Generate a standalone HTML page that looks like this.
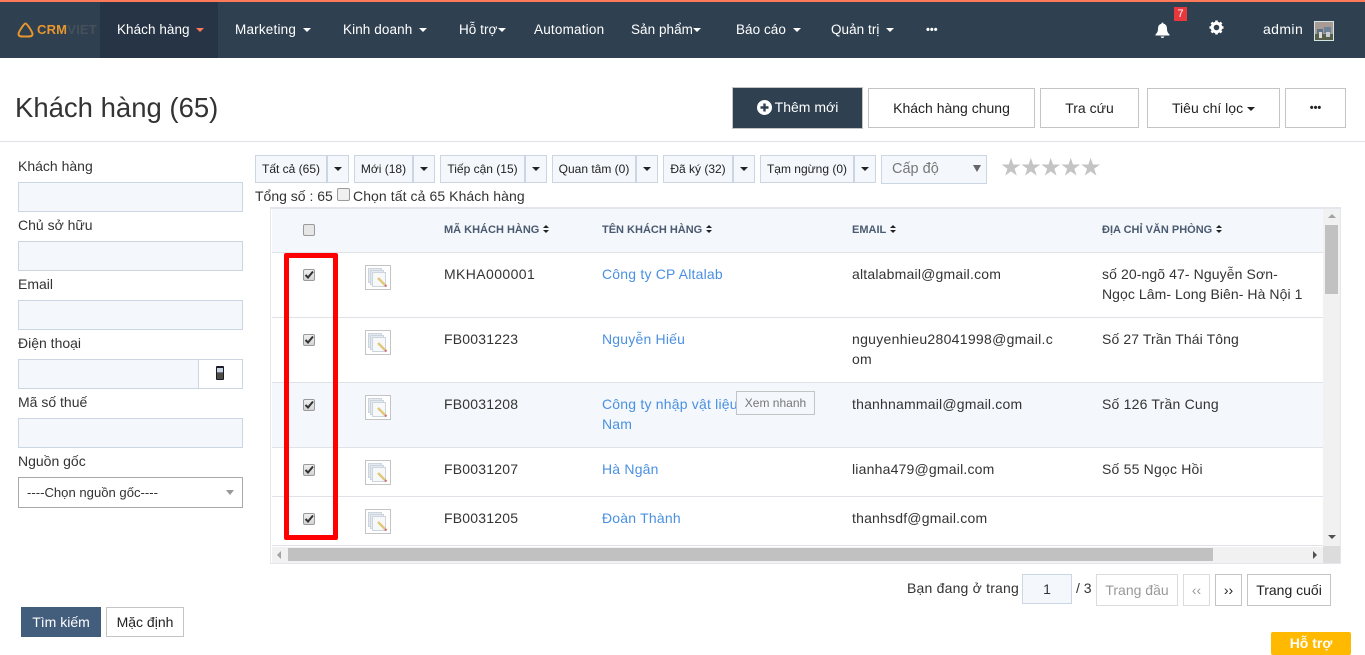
<!DOCTYPE html>
<html><head><meta charset="utf-8">
<style>
html,body{margin:0;padding:0;background:#fff}
body{width:1365px;height:655px;position:relative;overflow:hidden;font-family:"Liberation Sans","Noto Sans CJK SC",sans-serif;font-size:14px;color:#333}
.a,.t,.b,.i{position:absolute;box-sizing:border-box}
.t{white-space:nowrap;line-height:20px}
.w{letter-spacing:.2px}
.n{color:#fff;font-size:13.5px;top:20px;white-space:nowrap;line-height:20px;position:absolute;letter-spacing:.05px}
.car{display:inline-block;width:0;height:0;border-left:4px solid transparent;border-right:4px solid transparent;border-top:4px solid #fff;vertical-align:2px;margin-left:3px}
.b{border:1px solid #c4c4c4;background:#fff;color:#222;text-align:center;white-space:nowrap}
.i{background:#f4f7fb;border:1px solid #cbd6e2}
.f{background:#f4f7fb;border:1px solid #cbd6e2;color:#222;font-size:12px;text-align:center;height:28px;line-height:26px;top:155px;white-space:nowrap;position:absolute;box-sizing:border-box}
.f .car,.d .car{border-top-color:#222;margin:0}
.th{position:absolute;top:221px;font-size:11px;font-weight:bold;color:#4a5a70;line-height:18px;white-space:nowrap}
.so{display:inline-block;width:7px;height:9px;margin-left:4px;vertical-align:-1px;position:relative}
.so:before{content:"";position:absolute;left:0;top:0;border-left:3px solid transparent;border-right:3px solid transparent;border-bottom:3.5px solid #222}
.so:after{content:"";position:absolute;left:0;top:5px;border-left:3px solid transparent;border-right:3px solid transparent;border-top:3.5px solid #222}
.c{position:absolute;width:12px;height:12px;border:1px solid #9a9a9a;border-radius:2px;background:linear-gradient(#efefef,#d4d4d4);box-sizing:border-box}
.c svg{position:absolute;left:0;top:0}
.lk{color:#4a90e2}
.r{position:absolute;left:272px;width:1051px;border-bottom:1px solid #dfe2e6;box-sizing:border-box}
.ic{position:absolute;left:365px;width:26px;height:25px}
</style></head><body>

<!-- top bar -->
<div class="a" style="left:0;top:0;width:1365px;height:58px;background:#2f4050"></div>
<div class="a" style="left:0;top:0;width:1365px;height:2px;background:#ff7a59"></div>
<div class="a" style="left:100px;top:2px;width:118px;height:56px;background:#263445"></div>
<svg class="a" style="left:17px;top:22px" width="17" height="16" viewBox="0 0 17 16"><path d="M8.5 1.5 C10 1.5 15.5 10 15.500 12 C15.500 15 12 14.500 8.500 14.500 C5 14.500 1.500 15 1.500 12 C1.500 10 7 1.500 8.500 1.500Z" fill="none" stroke="#e8962e" stroke-width="2"/></svg>
<div class="t" style="left:37px;top:20px;font-size:13px;font-weight:bold;color:#e8962e;letter-spacing:.2px">CRM<span style="color:#46505a">VIET</span></div>
<div class="n" style="left:117px">Khách hàng <i class="car" style="border-top-color:#ff7a59"></i></div>
<div class="n" style="left:235px;letter-spacing:.2px">Marketing <i class="car"></i></div>
<div class="n" style="left:343px;letter-spacing:.1px">Kinh doanh <i class="car"></i></div>
<div class="n" style="left:459px">Hỗ trợ<i class="car" style="margin-left:1px"></i></div>
<div class="n" style="left:534px;letter-spacing:.2px">Automation</div>
<div class="n" style="left:631px">Sản phẩm<i class="car" style="margin-left:0"></i></div>
<div class="n" style="left:736px">Báo cáo <i class="car"></i></div>
<div class="n" style="left:831px">Quản trị <i class="car"></i></div>
<div class="n" style="left:926px;font-weight:bold;font-size:11px">•••</div>
<svg class="a" style="left:1154px;top:21px" width="17" height="18" viewBox="0 0 17 18"><path d="M8.500 1.500C9.200 1.500 9.500 2 9.500 2.700C12 3.200 13 5 13 8C13 11 14.500 12.500 15.500 13.500L15.500 14.500L1.500 14.500L1.500 13.500C2.500 12.500 4 11 4 8C4 5 5 3.200 7.500 2.700C7.500 2 7.800 1.500 8.500 1.500Z M6.700 15.500L10.300 15.500C10 16.700 9.300 17 8.500 17C7.700 17 7 16.700 6.700 15.500Z" fill="#fff"/></svg>
<div class="a" style="left:1174px;top:7px;width:13px;height:14px;background:#e8383d;color:#fff;font-size:11px;line-height:14px;text-align:center">7</div>
<svg class="a" style="left:1209px;top:20px" width="15" height="15" viewBox="0 0 15 15"><circle cx="7.500" cy="7.500" r="4.300" fill="none" stroke="#fff" stroke-width="3"/><g stroke="#fff" stroke-width="2.600"><path d="M7.500 0.500V3M7.500 12V14.500M.5 7.500H3M12 7.500H14.500M2.500 2.500L4.300 4.300M10.700 10.700L12.500 12.500M2.500 12.500L4.300 10.700M10.700 4.300L12.500 2.500"/></g></svg>
<div class="n" style="left:1263px;top:19px;font-size:14px;letter-spacing:.4px">admin</div>
<svg class="a" style="left:1314px;top:21px" width="20" height="20" viewBox="0 0 20 20"><rect width="20" height="20" fill="#d5e5e5"/><rect x="1" y="1" width="18" height="18" fill="#a89a94"/><rect x="3" y="8" width="6" height="5" fill="#5d7186"/><rect x="10" y="6" width="7" height="6" fill="#6d8296"/><rect x="1" y="13" width="18" height="6" fill="#555f4c"/><rect x="5" y="11" width="3" height="6" fill="#d8dcd4"/><rect x="12" y="11" width="4" height="5" fill="#c4ccd4"/></svg>

<!-- heading -->
<div class="t" style="left:15px;top:91px;font-size:27.5px;line-height:34px;color:#333">Khách hàng (65)</div>
<div class="a" style="left:0;top:141px;width:1365px;height:1px;background:#dfe3e8"></div>
<div class="b" style="left:732px;top:87px;width:131px;height:42px;background:#2f4050;color:#fff;line-height:38px"><svg style="vertical-align:-3px;margin-right:3px" width="15" height="15" viewBox="0 0 15 15"><circle cx="7.500" cy="7.500" r="7.500" fill="#fff"/><path d="M7.500 3.500V11.500M3.500 7.500H11.500" stroke="#2f4050" stroke-width="2.400"/></svg>Thêm mới</div>
<div class="b" style="left:868px;top:88px;width:167px;height:40px;line-height:38px">Khách hàng chung</div>
<div class="b" style="left:1040px;top:88px;width:99px;height:40px;line-height:38px">Tra cứu</div>
<div class="b" style="left:1147px;top:88px;width:133px;height:40px;line-height:38px">Tiêu chí lọc <i class="car" style="border-top-color:#222;margin-left:0"></i></div>
<div class="b" style="left:1285px;top:88px;width:61px;height:40px;line-height:38px;font-size:11px;font-weight:bold">•••</div>

<!-- left form -->
<div class="t" style="left:18px;top:156px">Khách hàng</div>
<div class="i" style="left:18px;top:182px;width:225px;height:30px"></div>
<div class="t" style="left:18px;top:215px">Chủ sở hữu</div>
<div class="i" style="left:18px;top:241px;width:225px;height:30px"></div>
<div class="t" style="left:18px;top:274px">Email</div>
<div class="i" style="left:18px;top:300px;width:225px;height:30px"></div>
<div class="t" style="left:18px;top:333px">Điện thoại</div>
<div class="i" style="left:18px;top:359px;width:181px;height:30px"></div>
<div class="b" style="left:198px;top:359px;width:45px;height:30px;border-color:#cbd6e2"></div>
<svg class="a" style="left:215px;top:365px" width="10" height="16" viewBox="0 0 10 16"><rect x="1" y="1" width="8" height="14" rx="1" fill="#1a1a2a"/><rect x="2" y="3" width="6" height="4.500" fill="#c8d4e0"/><path d="M2 9H8M2 11H8M2 13H8" stroke="#a8a070" stroke-width=".8"/></svg>
<div class="t" style="left:18px;top:392px">Mã số thuế</div>
<div class="i" style="left:18px;top:418px;width:225px;height:30px"></div>
<div class="t" style="left:18px;top:451px">Nguồn gốc</div>
<div class="a" style="left:18px;top:477px;width:225px;height:31px;border:1px solid #a9a9a9;background:#fff;font-size:13.100px;line-height:30px;padding-left:8px">----Chọn nguồn gốc----</div>
<div class="a" style="left:226px;top:490px;border-left:4px solid transparent;border-right:4px solid transparent;border-top:5px solid #999"></div>

<div class="a" style="left:21px;top:607px;width:80px;height:30px;background:#435d7d;color:#fff;text-align:center;line-height:30px">Tìm kiếm</div>
<div class="b" style="left:106px;top:607px;width:78px;height:30px;line-height:28px">Mặc định</div>

<!-- filter row -->
<div class="f" style="left:255px;width:72px">Tất cả (65)</div><div class="f d" style="left:327px;width:22px"><i class="car"></i></div>
<div class="f" style="left:354px;width:59px">Mới (18)</div><div class="f d" style="left:413px;width:22px"><i class="car"></i></div>
<div class="f" style="left:440px;width:85px">Tiếp cận (15)</div><div class="f d" style="left:525px;width:22px"><i class="car"></i></div>
<div class="f" style="left:552px;width:84px">Quan tâm (0)</div><div class="f d" style="left:636px;width:22px"><i class="car"></i></div>
<div class="f" style="left:663px;width:70px">Đã ký (32)</div><div class="f d" style="left:733px;width:22px"><i class="car"></i></div>
<div class="f" style="left:760px;width:94px">Tạm ngừng (0)</div><div class="f d" style="left:854px;width:22px"><i class="car"></i></div>
<div class="f" style="left:881px;width:106px;height:29px;font-size:14.500px;text-align:left;padding-left:10px;color:#777;line-height:27px">Cấp độ</div>
<div class="a" style="left:973px;top:165px;border-left:4px solid transparent;border-right:4px solid transparent;border-top:7px solid #666"></div>
<div class="t" style="left:1001px;top:156px;font-size:20px;line-height:24px;letter-spacing:-.1px;color:#c4c4c4">★★★★★</div>
<div class="t" style="left:255px;top:186px">Tổng số : 65</div>
<div class="c" style="left:337px;top:188px;width:13px;height:13px;background:#f0f0f0"></div>
<div class="t" style="left:353px;top:186px;letter-spacing:.08px">Chọn tất cả 65 Khách hàng</div>

<!-- table -->
<div class="a" style="left:270px;top:207px;width:1071px;height:357px;border:1px solid #e3e6ea;border-top:2px solid #e3e6ea;background:#fff"></div>
<div class="r" style="top:209px;height:44px;background:#f4f7fb"></div>
<div class="r" style="top:253px;height:65px"></div>
<div class="r" style="top:318px;height:65px"></div>
<div class="r" style="top:383px;height:65px;background:#f4f7fb"></div>
<div class="r" style="top:448px;height:49px"></div>
<div class="r" style="top:497px;height:49px"></div>

<div class="c" style="left:303px;top:224px;background:#e6e6e6"></div>
<div class="th" style="left:444px">MÃ KHÁCH HÀNG<i class="so"></i></div>
<div class="th" style="left:602px">TÊN KHÁCH HÀNG<i class="so"></i></div>
<div class="th" style="left:852px">EMAIL<i class="so"></i></div>
<div class="th" style="left:1102px">ĐỊA CHỈ VĂN PHÒNG<i class="so"></i></div>

<!-- checks -->
<div class="c" style="left:303px;top:269px"><svg width="10" height="10" viewBox="0 0 10 10"><path d="M1.500 5L4 7.500L9 1.500" fill="none" stroke="#333" stroke-width="2"/></svg></div>
<div class="c" style="left:303px;top:334px"><svg width="10" height="10" viewBox="0 0 10 10"><path d="M1.500 5L4 7.500L9 1.500" fill="none" stroke="#333" stroke-width="2"/></svg></div>
<div class="c" style="left:303px;top:399px"><svg width="10" height="10" viewBox="0 0 10 10"><path d="M1.500 5L4 7.500L9 1.500" fill="none" stroke="#333" stroke-width="2"/></svg></div>
<div class="c" style="left:303px;top:464px"><svg width="10" height="10" viewBox="0 0 10 10"><path d="M1.500 5L4 7.500L9 1.500" fill="none" stroke="#333" stroke-width="2"/></svg></div>
<div class="c" style="left:303px;top:513px"><svg width="10" height="10" viewBox="0 0 10 10"><path d="M1.500 5L4 7.500L9 1.500" fill="none" stroke="#333" stroke-width="2"/></svg></div>

<!-- edit icons -->
<svg class="ic" style="top:265px" viewBox="0 0 26 25"><rect x=".5" y=".5" width="25" height="24" fill="#fff" stroke="#c4c4c4"/><rect x="3.500" y="3.500" width="13" height="14" fill="#e4eaf0" stroke="#ccd5de"/><rect x="5.500" y="5.500" width="13" height="14" fill="#e4eaf0" stroke="#ccd5de"/><rect x="7.500" y="7.500" width="13" height="14" fill="#f6f8fa" stroke="#ccd5de"/><path d="M13 13L20 20" stroke="#e2c878" stroke-width="2.500"/><path d="M20 20L21.500 21.500" stroke="#c87080" stroke-width="2"/></svg>
<svg class="ic" style="top:330px" viewBox="0 0 26 25"><rect x=".5" y=".5" width="25" height="24" fill="#fff" stroke="#c4c4c4"/><rect x="3.500" y="3.500" width="13" height="14" fill="#e4eaf0" stroke="#ccd5de"/><rect x="5.500" y="5.500" width="13" height="14" fill="#e4eaf0" stroke="#ccd5de"/><rect x="7.500" y="7.500" width="13" height="14" fill="#f6f8fa" stroke="#ccd5de"/><path d="M13 13L20 20" stroke="#e2c878" stroke-width="2.500"/><path d="M20 20L21.500 21.500" stroke="#c87080" stroke-width="2"/></svg>
<svg class="ic" style="top:395px" viewBox="0 0 26 25"><rect x=".5" y=".5" width="25" height="24" fill="#fff" stroke="#c4c4c4"/><rect x="3.500" y="3.500" width="13" height="14" fill="#e4eaf0" stroke="#ccd5de"/><rect x="5.500" y="5.500" width="13" height="14" fill="#e4eaf0" stroke="#ccd5de"/><rect x="7.500" y="7.500" width="13" height="14" fill="#f6f8fa" stroke="#ccd5de"/><path d="M13 13L20 20" stroke="#e2c878" stroke-width="2.500"/><path d="M20 20L21.500 21.500" stroke="#c87080" stroke-width="2"/></svg>
<svg class="ic" style="top:460px" viewBox="0 0 26 25"><rect x=".5" y=".5" width="25" height="24" fill="#fff" stroke="#c4c4c4"/><rect x="3.500" y="3.500" width="13" height="14" fill="#e4eaf0" stroke="#ccd5de"/><rect x="5.500" y="5.500" width="13" height="14" fill="#e4eaf0" stroke="#ccd5de"/><rect x="7.500" y="7.500" width="13" height="14" fill="#f6f8fa" stroke="#ccd5de"/><path d="M13 13L20 20" stroke="#e2c878" stroke-width="2.500"/><path d="M20 20L21.500 21.500" stroke="#c87080" stroke-width="2"/></svg>
<svg class="ic" style="top:509px" viewBox="0 0 26 25"><rect x=".5" y=".5" width="25" height="24" fill="#fff" stroke="#c4c4c4"/><rect x="3.500" y="3.500" width="13" height="14" fill="#e4eaf0" stroke="#ccd5de"/><rect x="5.500" y="5.500" width="13" height="14" fill="#e4eaf0" stroke="#ccd5de"/><rect x="7.500" y="7.500" width="13" height="14" fill="#f6f8fa" stroke="#ccd5de"/><path d="M13 13L20 20" stroke="#e2c878" stroke-width="2.500"/><path d="M20 20L21.500 21.500" stroke="#c87080" stroke-width="2"/></svg>

<!-- rows -->
<div class="t" style="left:444px;top:264px;letter-spacing:.4px">MKHA000001</div>
<div class="t lk w" style="left:602px;top:264px">Công ty CP Altalab</div>
<div class="t w" style="left:852px;top:264px">altalabmail@gmail.com</div>
<div class="t" style="left:1102px;top:264px;letter-spacing:.1px">số 20-ngõ 47- Nguyễn Sơn-</div>
<div class="t" style="left:1102px;top:284px;letter-spacing:.07px">Ngọc Lâm- Long Biên- Hà Nội 1</div>

<div class="t w" style="left:444px;top:329px">FB0031223</div>
<div class="t lk w" style="left:602px;top:329px">Nguyễn Hiếu</div>
<div class="t" style="left:852px;top:329px;letter-spacing:.3px">nguyenhieu28041998@gmail.c</div>
<div class="t w" style="left:852px;top:349px">om</div>
<div class="t" style="left:1102px;top:329px;letter-spacing:.1px">Số 27 Trần Thái Tông</div>

<div class="t w" style="left:444px;top:394px">FB0031208</div>
<div class="t lk w" style="left:602px;top:394px">Công ty nhập vật liệu</div>
<div class="t lk w" style="left:602px;top:414px">Nam</div>
<div class="a" style="left:736px;top:391px;width:79px;height:24px;border:1px solid #c4c4c4;background:#f4f7fb;color:#777;font-size:12px;line-height:22px;text-align:center">Xem nhanh</div>
<div class="t w" style="left:852px;top:394px">thanhnammail@gmail.com</div>
<div class="t w" style="left:1102px;top:394px">Số 126 Trần Cung</div>

<div class="t w" style="left:444px;top:459px">FB0031207</div>
<div class="t lk w" style="left:602px;top:459px">Hà Ngân</div>
<div class="t w" style="left:852px;top:459px">lianha479@gmail.com</div>
<div class="t w" style="left:1102px;top:459px">Số 55 Ngọc Hồi</div>

<div class="t w" style="left:444px;top:508px">FB0031205</div>
<div class="t lk w" style="left:602px;top:508px">Đoàn Thành</div>
<div class="t w" style="left:852px;top:508px">thanhsdf@gmail.com</div>

<!-- scrollbars -->
<div class="a" style="left:1323px;top:209px;width:17px;height:337px;background:#f1f1f1"></div>
<div class="a" style="left:1325px;top:225px;width:13px;height:69px;background:#c1c1c1"></div>
<div class="a" style="left:1328px;top:214px;border-left:4px solid transparent;border-right:4px solid transparent;border-bottom:4px solid #a3a3a3"></div>
<div class="a" style="left:1328px;top:535px;border-left:4px solid transparent;border-right:4px solid transparent;border-top:4px solid #505050"></div>
<div class="a" style="left:272px;top:547px;width:1051px;height:16px;background:#f1f1f1"></div>
<div class="a" style="left:1323px;top:546px;width:17px;height:17px;background:#dcdcdc"></div>
<div class="a" style="left:288px;top:548px;width:925px;height:13px;background:#c1c1c1"></div>
<div class="a" style="left:277px;top:551px;border-top:4px solid transparent;border-bottom:4px solid transparent;border-right:4px solid #a3a3a3"></div>
<div class="a" style="left:1313px;top:551px;border-top:4px solid transparent;border-bottom:4px solid transparent;border-left:4px solid #505050"></div>

<!-- red highlight -->
<div class="a" style="left:284px;top:253px;width:54px;height:287px;border:5px solid #f00;border-radius:2px"></div>

<!-- pagination -->
<div class="t" style="left:907px;top:578px;letter-spacing:.2px">Bạn đang ở trang</div>
<div class="a" style="left:1022px;top:574px;width:50px;height:30px;background:#f4f7fb;border:1px solid #cbd6e2;text-align:center;line-height:28px">1</div>
<div class="t" style="left:1076px;top:578px">/ 3</div>
<div class="b" style="left:1096px;top:574px;width:82px;height:32px;line-height:30px;color:#999;border-color:#dcdcdc">Trang đầu</div>
<div class="b" style="left:1183px;top:574px;width:27px;height:32px;line-height:30px;color:#999;border-color:#dcdcdc">‹‹</div>
<div class="b" style="left:1215px;top:574px;width:27px;height:32px;line-height:30px">››</div>
<div class="b" style="left:1247px;top:574px;width:84px;height:32px;line-height:30px">Trang cuối</div>
<div class="a" style="left:1271px;top:632px;width:80px;height:23px;background:#ffb900;border-radius:2px;color:#fff;font-weight:bold;text-align:center;line-height:23px">Hỗ trợ</div>
</body></html>
